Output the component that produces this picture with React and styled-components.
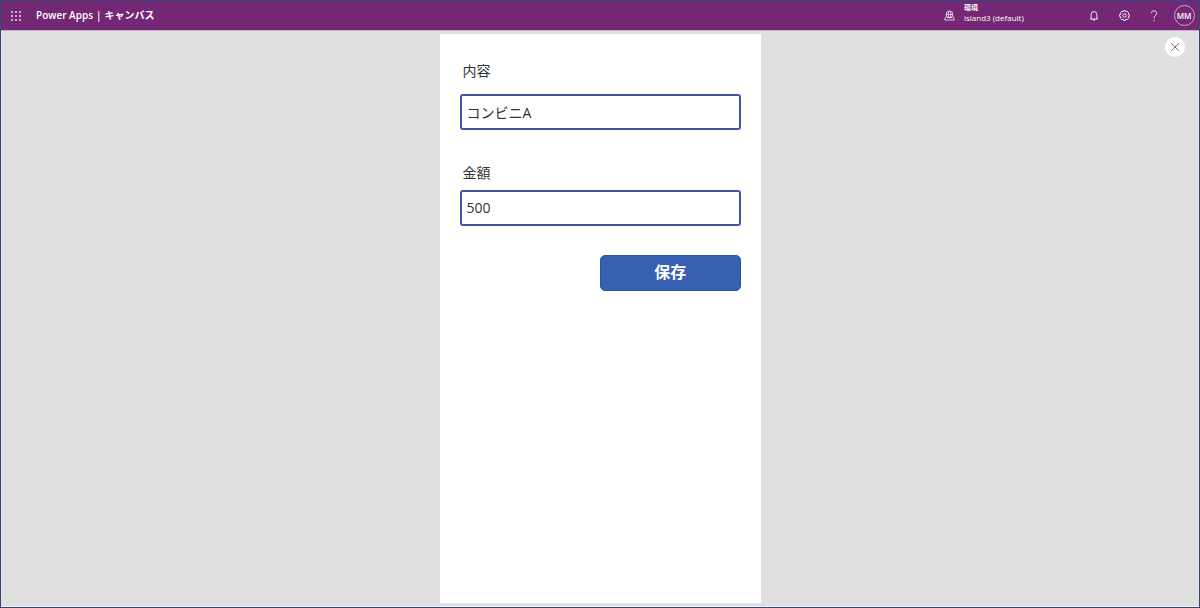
import { useState } from 'react';
import styled, { createGlobalStyle } from 'styled-components';

function App() {
  const [content, setContent] = useState('コンビニA');
  const [amount, setAmount] = useState('500');

  const handleSubmit = e => {
    e.preventDefault();
  };

  return (
    <StyledPage>
      <GlobalStyle />
      <Header />
      <StyledStage>
        <StyledScreen onSubmit={handleSubmit}>
          <StyledField $gap="13px" $space="33px">
            <StyledLabel htmlFor="content">内容</StyledLabel>
            <StyledInput
              id="content"
              value={content}
              onChange={e => setContent(e.target.value)}
            />
          </StyledField>
          <StyledField $gap="7px" $space="29px">
            <StyledLabel htmlFor="amount">金額</StyledLabel>
            <StyledInput
              id="amount"
              value={amount}
              onChange={e => setAmount(e.target.value)}
            />
          </StyledField>
          <StyledSaveButton type="submit">保存</StyledSaveButton>
        </StyledScreen>
        <StyledCloseButton type="button" aria-label="閉じる">
          <svg width="8" height="8" viewBox="0 0 8 8" stroke="#9a5a98">
            <path d="M0.2 0.2L7.8 7.8M7.8 0.2L0.2 7.8" />
          </svg>
        </StyledCloseButton>
      </StyledStage>
    </StyledPage>
  );
}

function Header() {
  return (
    <StyledHeader>
      <StyledIconButton type="button" aria-label="アプリ起動ツール">
        <WaffleIcon />
      </StyledIconButton>
      <StyledBrand>
        <StyledLink href="#home">Power Apps</StyledLink>
        <span>|</span>
        <StyledLink href="#canvas">キャンバス</StyledLink>
      </StyledBrand>
      <StyledEnvironment type="button">
        <EnvironmentIcon />
        <StyledEnvironmentText>
          <StyledEnvironmentCaption>環境</StyledEnvironmentCaption>
          <span>island3 (default)</span>
        </StyledEnvironmentText>
      </StyledEnvironment>
      <StyledActions>
        <StyledIconButton type="button" aria-label="通知">
          <BellIcon />
        </StyledIconButton>
        <StyledIconButton type="button" aria-label="設定">
          <GearIcon />
        </StyledIconButton>
        <StyledIconButton type="button" aria-label="ヘルプ">
          <HelpIcon />
        </StyledIconButton>
        <StyledIconButton type="button" aria-label="アカウント">
          <StyledAvatar>MM</StyledAvatar>
        </StyledIconButton>
      </StyledActions>
    </StyledHeader>
  );
}

function WaffleIcon() {
  const steps = [1, 5, 9];
  return (
    <svg width="10" height="10" viewBox="0 0 10 10" fill="#eadcea">
      {steps.map(y =>
        steps.map(x => <circle key={`${x}-${y}`} cx={x} cy={y} r="1" />)
      )}
    </svg>
  );
}

function EnvironmentIcon() {
  return (
    <svg
      width="11"
      height="11"
      viewBox="0 0 11 11"
      fill="none"
      stroke="#e6d5e6"
      strokeWidth="0.9"
    >
      <circle cx="5.5" cy="4.4" r="3.4" />
      <ellipse cx="5.5" cy="4.4" rx="1.4" ry="3.4" />
      <path d="M2.1 4.4h6.8M1.8 6.6L0.6 10h9.8L9.2 6.6M2.6 7.6h5.8" />
    </svg>
  );
}

function BellIcon() {
  return (
    <svg
      width="10"
      height="10"
      viewBox="0 0 10 10"
      fill="none"
      stroke="#f0e4f0"
      strokeWidth="1"
    >
      <path d="M2.1 8V3.5a2.9 2.9 0 0 1 5.8 0V8M1 8h8M3.9 8.3a1.1 1.1 0 0 0 2.2 0" />
    </svg>
  );
}

function GearIcon() {
  return (
    <svg
      width="11"
      height="11"
      viewBox="0 0 11 11"
      fill="none"
      stroke="#f0e4f0"
      strokeWidth="1"
      strokeLinejoin="round"
    >
      <path d="M4.5 0.6h2l0.4 1.3 1.3-0.6 1.4 1.4-0.6 1.3 1.4 0.5v2l-1.4 0.5 0.6 1.3-1.4 1.4-1.3-0.6-0.4 1.3h-2l-0.4-1.3-1.3 0.6-1.4-1.4 0.6-1.3-1.4-0.5v-2l1.4-0.5-0.6-1.3 1.4-1.4 1.3 0.6z" />
      <circle cx="5.5" cy="5.5" r="1.7" />
    </svg>
  );
}

function HelpIcon() {
  return (
    <svg
      width="8"
      height="12"
      viewBox="0 0 8 12"
      fill="none"
      stroke="#f0e4f0"
      strokeWidth="1"
    >
      <path d="M1.4 3.2C1.4 1.6 2.5 0.8 4 0.8s2.7 0.9 2.7 2.4c0 2.2-2.7 2.5-2.7 5.1" />
      <path d="M4 9.8v1.4" />
    </svg>
  );
}

const GlobalStyle = createGlobalStyle`
  * {
    box-sizing: border-box;
  }

  body {
    margin: 0;
    font-family: 'Open Sans', 'Noto Sans CJK JP', sans-serif;
  }

  button,
  input {
    font-family: inherit;
  }

  svg {
    display: block;
  }
`;

const StyledPage = styled.div`
  display: flex;
  flex-direction: column;
  min-height: 100vh;
  border: 1px solid #34496f;
  background-color: #e0e0e0;
`;

const StyledHeader = styled.header`
  display: flex;
  align-items: center;
  height: 30px;
  color: #fff;
  background-color: #742774;
  border-bottom: 1px solid #c9b3c9;
`;

const StyledIconButton = styled.button`
  display: flex;
  align-items: center;
  justify-content: center;
  width: 30px;
  height: 28px;
  padding: 0;
  border: 0;
  color: inherit;
  background: none;
  cursor: pointer;
`;

const StyledBrand = styled.nav`
  display: flex;
  gap: 3px;
  margin-left: 5px;
  padding-bottom: 2px;
  font-size: 10px;
  font-weight: 600;
  line-height: 16px;
`;

const StyledLink = styled.a`
  color: inherit;
  text-decoration: none;
`;

const StyledEnvironment = styled.button`
  display: flex;
  align-items: center;
  gap: 9px;
  margin-left: auto;
  padding: 0;
  border: 0;
  color: #fff;
  background: none;
  cursor: pointer;
`;

const StyledEnvironmentText = styled.span`
  display: flex;
  flex-direction: column;
  width: 115px;
  padding-bottom: 6px;
  font-size: 8px;
  line-height: 10px;
  text-align: left;
`;

const StyledEnvironmentCaption = styled.span`
  font-size: 7px;
  font-weight: 600;
`;

const StyledActions = styled.div`
  display: flex;
`;

const StyledAvatar = styled.span`
  display: flex;
  align-items: center;
  justify-content: center;
  width: 21px;
  height: 21px;
  border: 1px solid #c9a6c9;
  border-radius: 50%;
  font-size: 8px;
  font-weight: 600;
`;

const StyledStage = styled.main`
  position: relative;
  display: flex;
  flex: 1;
  justify-content: center;
  padding: 3px 0;
  border-bottom: 1px solid #f4f4f4;
`;

const StyledScreen = styled.form`
  display: flex;
  flex-direction: column;
  width: 100%;
  max-width: 321px;
  padding: 27px 20px;
  background-color: #fff;
`;

const StyledField = styled.div`
  display: flex;
  flex-direction: column;
  gap: ${({ $gap }) => $gap};
  margin-bottom: ${({ $space }) => $space};
`;

const StyledLabel = styled.label`
  padding-left: 3px;
  color: #333;
  font-size: 14px;
  line-height: 20px;
`;

const StyledInput = styled.input`
  width: 100%;
  height: 36px;
  padding: 0 5px 1px;
  border: 2px solid #4553a0;
  border-radius: 3px;
  color: #333;
  background-color: #fff;
  font-size: 14px;
  outline: none;
`;

const StyledSaveButton = styled.button`
  align-self: flex-end;
  width: 50%;
  height: 36px;
  padding: 0 0 4px;
  border: 1px solid #2c559f;
  border-radius: 5px;
  color: #fff;
  background-color: #3860b2;
  font-size: 16px;
  font-weight: 700;
  cursor: pointer;
`;

/* floats over the top right corner of the stage */
const StyledCloseButton = styled.button`
  position: absolute;
  top: 6px;
  right: 14px;
  display: flex;
  align-items: center;
  justify-content: center;
  width: 20px;
  height: 20px;
  padding: 0;
  border: 0;
  border-radius: 50%;
  background-color: #fff;
  cursor: pointer;
`;

export default App;
